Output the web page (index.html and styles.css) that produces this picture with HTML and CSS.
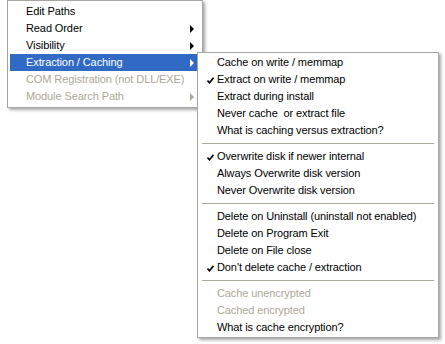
FILE: index.html
```
<!doctype html>
<html lang="en">
  <head>
    <meta charset="UTF-8" />
    <title>Extraction / Caching menu</title>
    <link rel="stylesheet" href="styles.css">
  </head>
  <body>
    <div class="menu main-menu">
      <div class="item">Edit Paths</div>
      <div class="item has-sub">Read Order<span class="arrow"></span></div>
      <div class="item has-sub">Visibility<span class="arrow"></span></div>
      <div class="item has-sub active">Extraction / Caching<span class="arrow"></span></div>
      <div class="item disabled">COM Registration (not DLL/EXE)</div>
      <div class="item has-sub disabled">Module Search Path<span class="arrow"></span></div>
    </div>

    <div class="menu sub-menu">
      <div class="item">Cache on write / memmap</div>
      <div class="item checked">
        <svg class="check" width="7" height="7" viewBox="0 0 7 7"><path d="M0.5 3.5 L2.5 5.8 L6.5 0.8" /></svg>
        Extract on write / memmap
      </div>
      <div class="item">Extract during install</div>
      <div class="item">Never cache&nbsp; or extract file</div>
      <div class="item">What is caching versus extraction?</div>
      <div class="separator"></div>
      <div class="item checked">
        <svg class="check" width="7" height="7" viewBox="0 0 7 7"><path d="M0.5 3.5 L2.5 5.8 L6.5 0.8" /></svg>
        Overwrite disk if newer internal
      </div>
      <div class="item">Always Overwrite disk version</div>
      <div class="item">Never Overwrite disk version</div>
      <div class="separator"></div>
      <div class="item">Delete on Uninstall (uninstall not enabled)</div>
      <div class="item">Delete on Program Exit</div>
      <div class="item">Delete on File close</div>
      <div class="item checked">
        <svg class="check" width="7" height="7" viewBox="0 0 7 7"><path d="M0.5 3.5 L2.5 5.8 L6.5 0.8" /></svg>
        Don't delete cache / extraction
      </div>
      <div class="separator"></div>
      <div class="item disabled">Cache unencrypted</div>
      <div class="item disabled">Cached encrypted</div>
      <div class="item">What is cache encryption?</div>
    </div>
  </body>
</html>
```

FILE: styles.css
```
* {
  margin: 0;
  padding: 0;
  box-sizing: border-box;
}
body {
  background: #fff;
  font-family: "Liberation Sans", Arial, sans-serif;
  font-size: 11px;
  letter-spacing: -0.1px;
  color: #000;
  width: 445px;
  height: 344px;
  overflow: hidden;
  position: relative;
}
.menu {
  position: absolute;
  background: #fff;
  border: 1px solid #a7a6a0;
  box-shadow: 2px 2px 3px rgba(0, 0, 0, 0.35);
}
.main-menu {
  left: 7px;
  top: 0;
  width: 196px;
  padding: 2px 2px;
}
.sub-menu {
  left: 197px;
  top: 52px;
  width: 242px;
  padding: 1px 2px;
}
.item {
  position: relative;
  height: 17px;
  line-height: 17px;
  white-space: nowrap;
}
.main-menu .item {
  padding-left: 16px;
}
.sub-menu .item {
  padding-left: 17px;
}
.item.active {
  background: #316ac5;
  color: #fff;
}
.item.disabled {
  color: #aca899;
}
.arrow {
  position: absolute;
  right: 6px;
  top: 5px;
  border-left: 4px solid #000;
  border-top: 4px solid transparent;
  border-bottom: 4px solid transparent;
}
.active .arrow {
  border-left-color: #fff;
}
.disabled .arrow {
  border-left-color: #aca899;
}
.check {
  position: absolute;
  left: 7px;
  top: 6px;
}
.check path {
  fill: none;
  stroke: #000;
  stroke-width: 1.6;
}
.separator {
  height: 9px;
  display: flex;
  align-items: center;
  padding: 0 2px;
}
.separator::before {
  content: "";
  flex: 1;
  height: 1px;
  background: #aca899;
}
```
